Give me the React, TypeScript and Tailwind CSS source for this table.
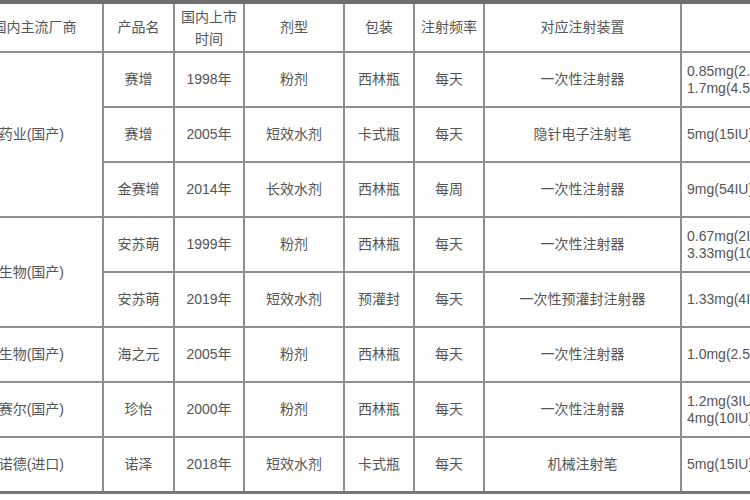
import React from 'react'

type Row = {
  maker?: string
  span?: number
  product: string
  year: string
  form: string
  pack: string
  freq: string
  device: string
  spec: string[]
}

const rows: Row[] = [
  { maker: '金赛药业(国产)', span: 3, product: '赛增', year: '1998年', form: '粉剂', pack: '西林瓶', freq: '每天', device: '一次性注射器', spec: ['0.85mg(2.5IU)', '1.7mg(4.5IU)'] },
  { product: '赛增', year: '2005年', form: '短效水剂', pack: '卡式瓶', freq: '每天', device: '隐针电子注射笔', spec: ['5mg(15IU)'] },
  { product: '金赛增', year: '2014年', form: '长效水剂', pack: '西林瓶', freq: '每周', device: '一次性注射器', spec: ['9mg(54IU)'] },
  { maker: '安科生物(国产)', span: 2, product: '安苏萌', year: '1999年', form: '粉剂', pack: '西林瓶', freq: '每天', device: '一次性注射器', spec: ['0.67mg(2IU)', '3.33mg(10IU)'] },
  { product: '安苏萌', year: '2019年', form: '短效水剂', pack: '预灌封', freq: '每天', device: '一次性预灌封注射器', spec: ['1.33mg(4IU)'] },
  { maker: '科兴生物(国产)', span: 1, product: '海之元', year: '2005年', form: '粉剂', pack: '西林瓶', freq: '每天', device: '一次性注射器', spec: ['1.0mg(2.5IU)'] },
  { maker: '联合赛尔(国产)', span: 1, product: '珍怡', year: '2000年', form: '粉剂', pack: '西林瓶', freq: '每天', device: '一次性注射器', spec: ['1.2mg(3IU)', '4mg(10IU)'] },
  { maker: '诺和诺德(进口)', span: 1, product: '诺泽', year: '2018年', form: '短效水剂', pack: '卡式瓶', freq: '每天', device: '机械注射笔', spec: ['5mg(15IU)'] },
]

const cell = 'border-2 border-[#8f8f8f] text-center align-middle p-0 whitespace-nowrap'
const head = cell + ' border-t-4 border-t-[#6e6e6e]'

export default function App() {
  return (
    <div
      className="w-[750px] h-[500px] overflow-hidden bg-white text-[#555] text-[14px]"
      style={{ fontFamily: '"Liberation Sans", "Noto Sans CJK SC", sans-serif' }}
    >
      <table className="table-fixed border-collapse -ml-[35px] w-[905px]">
        <colgroup>
          <col className="w-[137px]" />
          <col className="w-[71px]" />
          <col className="w-[70px]" />
          <col className="w-[100px]" />
          <col className="w-[70px]" />
          <col className="w-[70px]" />
          <col className="w-[197px]" />
          <col className="w-[190px]" />
        </colgroup>
        <thead>
          <tr className="h-[50px]">
            <th className={head + ' font-normal'}>国内主流厂商</th>
            <th className={head + ' font-normal'}>产品名</th>
            <th className={head + ' font-normal leading-[22px]'}>
              国内上市
              <br />
              时间
            </th>
            <th className={head + ' font-normal'}>剂型</th>
            <th className={head + ' font-normal'}>包装</th>
            <th className={head + ' font-normal'}>注射频率</th>
            <th className={head + ' font-normal'}>对应注射装置</th>
            <th className={head + ' font-normal'}></th>
          </tr>
        </thead>
        <tbody>
          {rows.map((r, i) => (
            <tr key={i} className={'h-[55px]' + (i === rows.length - 1 ? ' border-b-[3px] border-b-[#777]' : '')}>
              {r.maker && (
                <td rowSpan={r.span} className={cell + ' text-right pr-[38px]'}>
                  {r.maker}
                </td>
              )}
              <td className={cell}>{r.product}</td>
              <td className={cell}>{r.year}</td>
              <td className={cell}>{r.form}</td>
              <td className={cell}>{r.pack}</td>
              <td className={cell}>{r.freq}</td>
              <td className={cell}>{r.device}</td>
              <td className={cell + ' text-left pl-[5px] leading-[17px]'}>
                {r.spec.map(s => (
                  <div key={s}>{s}</div>
                ))}
              </td>
            </tr>
          ))}
        </tbody>
      </table>
    </div>
  )
}
